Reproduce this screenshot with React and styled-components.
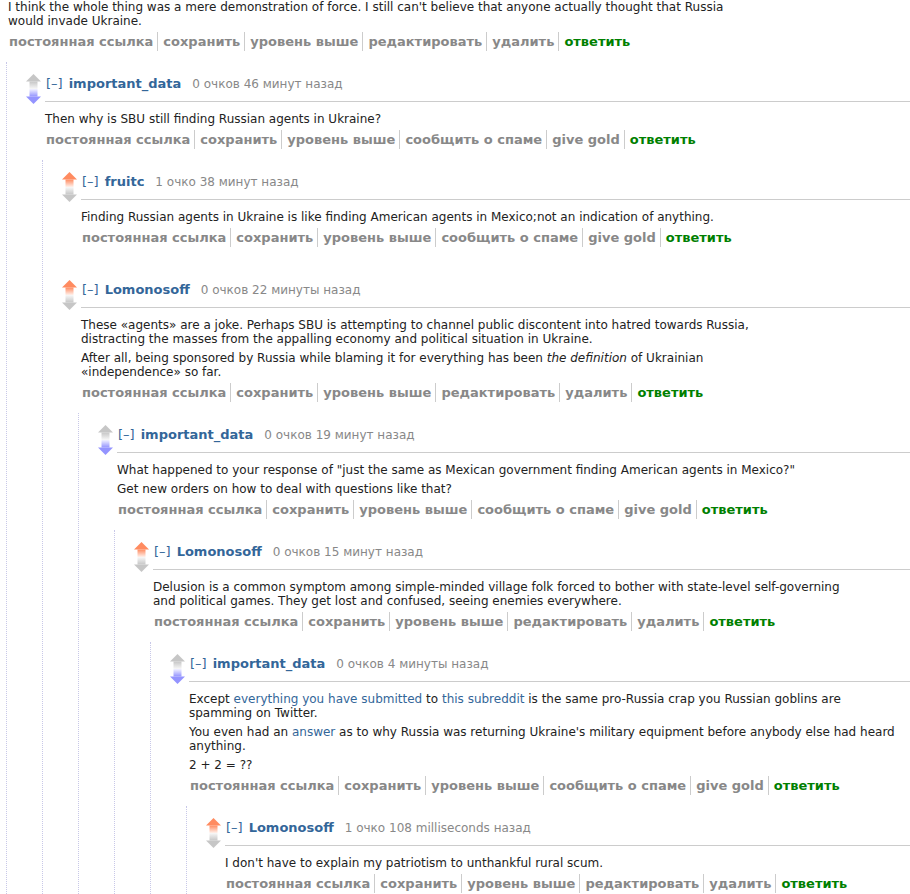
import React, { useId } from 'react';
import styled, { createGlobalStyle } from 'styled-components';

const Global = createGlobalStyle`
  html, body { margin: 0; padding: 0; background: #fff; }
  body {
    font-family: "DejaVu Sans", Verdana, sans-serif;
    font-size: 12px;
    color: #222;
  }
`;

const Page = styled.div`
  padding-left: 8px;
`;

const CommentRow = styled.div`
  display: flex;
  padding-top: 12px;
  margin-bottom: 10px;
`;

const Midcol = styled.div`
  flex: none;
  width: 15px;
  margin-right: 4px;
  display: flex;
  flex-direction: column;
`;

const ArrowSvg = styled.svg`
  display: block;
  width: 15px;
  height: 15px;
`;

const Entry = styled.div`
  flex: 1;
  min-width: 0;
  display: flex;
  flex-direction: column;
  padding-top: ${(p) => (p.$top ? 0 : 3)}px;
`;

const Tagline = styled.div`
  height: 14px;
  line-height: 14px;
  padding-bottom: 10px;
  border-bottom: 1px solid #ccc;
  color: #888;
  white-space: nowrap;
`;

const Expand = styled.a`
  color: #369;
  font-size: 13px;
  text-decoration: none;
  margin: 0 6px 0 1px;
`;

const Author = styled.a`
  color: #369;
  font-size: 13px;
  font-weight: bold;
  text-decoration: none;
  margin-right: 11px;
`;

const Score = styled.span`
  color: #888;
`;

const Body = styled.div`
  margin-top: ${(p) => (p.$top ? 0 : 10)}px;
  color: #222;
  line-height: 14px;
  white-space: nowrap;
`;

const P = styled.p`
  margin: 0 0 5px;
`;

const Link = styled.a`
  color: #369;
  text-decoration: none;
`;

const Buttons = styled.ul`
  list-style: none;
  margin: -1px 0 1px;
  padding: 0;
  display: flex;
  font-size: 13px;
  font-weight: bold;
  line-height: 19px;
  white-space: nowrap;
`;

const Btn = styled.li`
  color: ${(p) => (p.$reply ? '#008000' : '#888')};
  padding: 0 4px 0 5px;
  border-left: 1px solid #ccc;
  &:first-child {
    border-left: none;
    padding-left: 1px;
  }
`;

const Children = styled.div`
  margin-top: 10px;
  margin-left: ${(p) => (p.$root ? -2 : -3)}px;
  padding-left: 19px;
  border-left: 1px dotted #c8c8e8;
  display: flex;
  flex-direction: column;
`;

const COLORS = { up: '#ff8b60', down: '#9494ff', none: '#c6c6c6' };

function Arrow({ dir, color }) {
  const id = useId().replace(/:/g, '');
  if (dir === 'up') {
    return (
      <ArrowSvg viewBox="0 0 15 15">
        <defs>
          <linearGradient id={id} x1="0" y1="0" x2="0" y2="1">
            <stop offset="0" stopColor={color} />
            <stop offset="1" stopColor={color} stopOpacity="0.12" />
          </linearGradient>
        </defs>
        <polygon points="7.5,0 15,7.5 0,7.5" fill={color} />
        <rect x="3.5" y="7.5" width="8" height="7.5" fill={`url(#${id})`} />
      </ArrowSvg>
    );
  }
  return (
    <ArrowSvg viewBox="0 0 15 15">
      <defs>
        <linearGradient id={id} x1="0" y1="0" x2="0" y2="1">
          <stop offset="0" stopColor={color} stopOpacity="0.12" />
          <stop offset="1" stopColor={color} />
        </linearGradient>
      </defs>
      <rect x="3.5" y="0" width="8" height="7.5" fill={`url(#${id})`} />
      <polygon points="0,7.5 15,7.5 7.5,15" fill={color} />
    </ArrowSvg>
  );
}

const OWN = ['постоянная ссылка', 'сохранить', 'уровень выше', 'редактировать', 'удалить'];
const OTHER = ['постоянная ссылка', 'сохранить', 'уровень выше', 'сообщить о спаме', 'give gold'];

function ButtonList({ own }) {
  const items = own ? OWN : OTHER;
  return (
    <Buttons>
      {items.map((t) => (
        <Btn key={t}>{t}</Btn>
      ))}
      <Btn $reply>ответить</Btn>
    </Buttons>
  );
}

function Comment({ c }) {
  return (
    <CommentRow>
      <Midcol>
        <Arrow dir="up" color={c.vote === 'up' ? COLORS.up : COLORS.none} />
        <Arrow dir="down" color={c.vote === 'down' ? COLORS.down : COLORS.none} />
      </Midcol>
      <Entry>
        <Tagline>
          <Expand>[–]</Expand>
          <Author>{c.author}</Author>
          <Score>{c.meta}</Score>
        </Tagline>
        <Body>{c.body}</Body>
        <ButtonList own={c.own} />
        <Children>
          {(c.children || []).map((k, i) => (
            <Comment key={i} c={k} />
          ))}
        </Children>
      </Entry>
    </CommentRow>
  );
}

const thread = [
  {
    author: 'important_data',
    meta: '0 очков 46 минут назад',
    vote: 'down',
    body: <P>Then why is SBU still finding Russian agents in Ukraine?</P>,
    children: [
      {
        author: 'fruitc',
        meta: '1 очко 38 минут назад',
        vote: 'up',
        body: (
          <P>
            Finding Russian agents in Ukraine is like finding American agents in Mexico;not an
            indication of anything.
          </P>
        ),
      },
      {
        author: 'Lomonosoff',
        meta: '0 очков 22 минуты назад',
        vote: 'up',
        own: true,
        body: (
          <>
            <P>
              These «agents» are a joke. Perhaps SBU is attempting to channel public discontent
              into hatred towards Russia,
              <br />
              distracting the masses from the appalling economy and political situation in Ukraine.
            </P>
            <P>
              After all, being sponsored by Russia while blaming it for everything has been{' '}
              <em>the definition</em> of Ukrainian
              <br />
              «independence» so far.
            </P>
          </>
        ),
        children: [
          {
            author: 'important_data',
            meta: '0 очков 19 минут назад',
            vote: 'down',
            body: (
              <>
                <P>
                  What happened to your response of "just the same as Mexican government finding
                  American agents in Mexico?"
                </P>
                <P>Get new orders on how to deal with questions like that?</P>
              </>
            ),
            children: [
              {
                author: 'Lomonosoff',
                meta: '0 очков 15 минут назад',
                vote: 'up',
                own: true,
                body: (
                  <P>
                    Delusion is a common symptom among simple-minded village folk forced to bother
                    with state-level self-governing
                    <br />
                    and political games. They get lost and confused, seeing enemies everywhere.
                  </P>
                ),
                children: [
                  {
                    author: 'important_data',
                    meta: '0 очков 4 минуты назад',
                    vote: 'down',
                    body: (
                      <>
                        <P>
                          Except <Link>everything you have submitted</Link> to{' '}
                          <Link>this subreddit</Link> is the same pro-Russia crap you Russian
                          goblins are
                          <br />
                          spamming on Twitter.
                        </P>
                        <P>
                          You even had an <Link>answer</Link> as to why Russia was returning
                          Ukraine's military equipment before anybody else had heard
                          <br />
                          anything.
                        </P>
                        <P>2 + 2 = ??</P>
                      </>
                    ),
                    children: [
                      {
                        author: 'Lomonosoff',
                        meta: '1 очко 108 milliseconds назад',
                        vote: 'up',
                        own: true,
                        body: <P>I don't have to explain my patriotism to unthankful rural scum.</P>,
                      },
                    ],
                  },
                ],
              },
            ],
          },
        ],
      },
    ],
  },
];

export default function App() {
  return (
    <>
      <Global />
      <Page>
        <Entry $top>
          <Body $top>
            <P>
              I think the whole thing was a mere demonstration of force. I still can't believe that
              anyone actually thought that Russia
              <br />
              would invade Ukraine.
            </P>
          </Body>
          <ButtonList own />
          <Children $root>
            {thread.map((c, i) => (
              <Comment key={i} c={c} />
            ))}
          </Children>
        </Entry>
      </Page>
    </>
  );
}
